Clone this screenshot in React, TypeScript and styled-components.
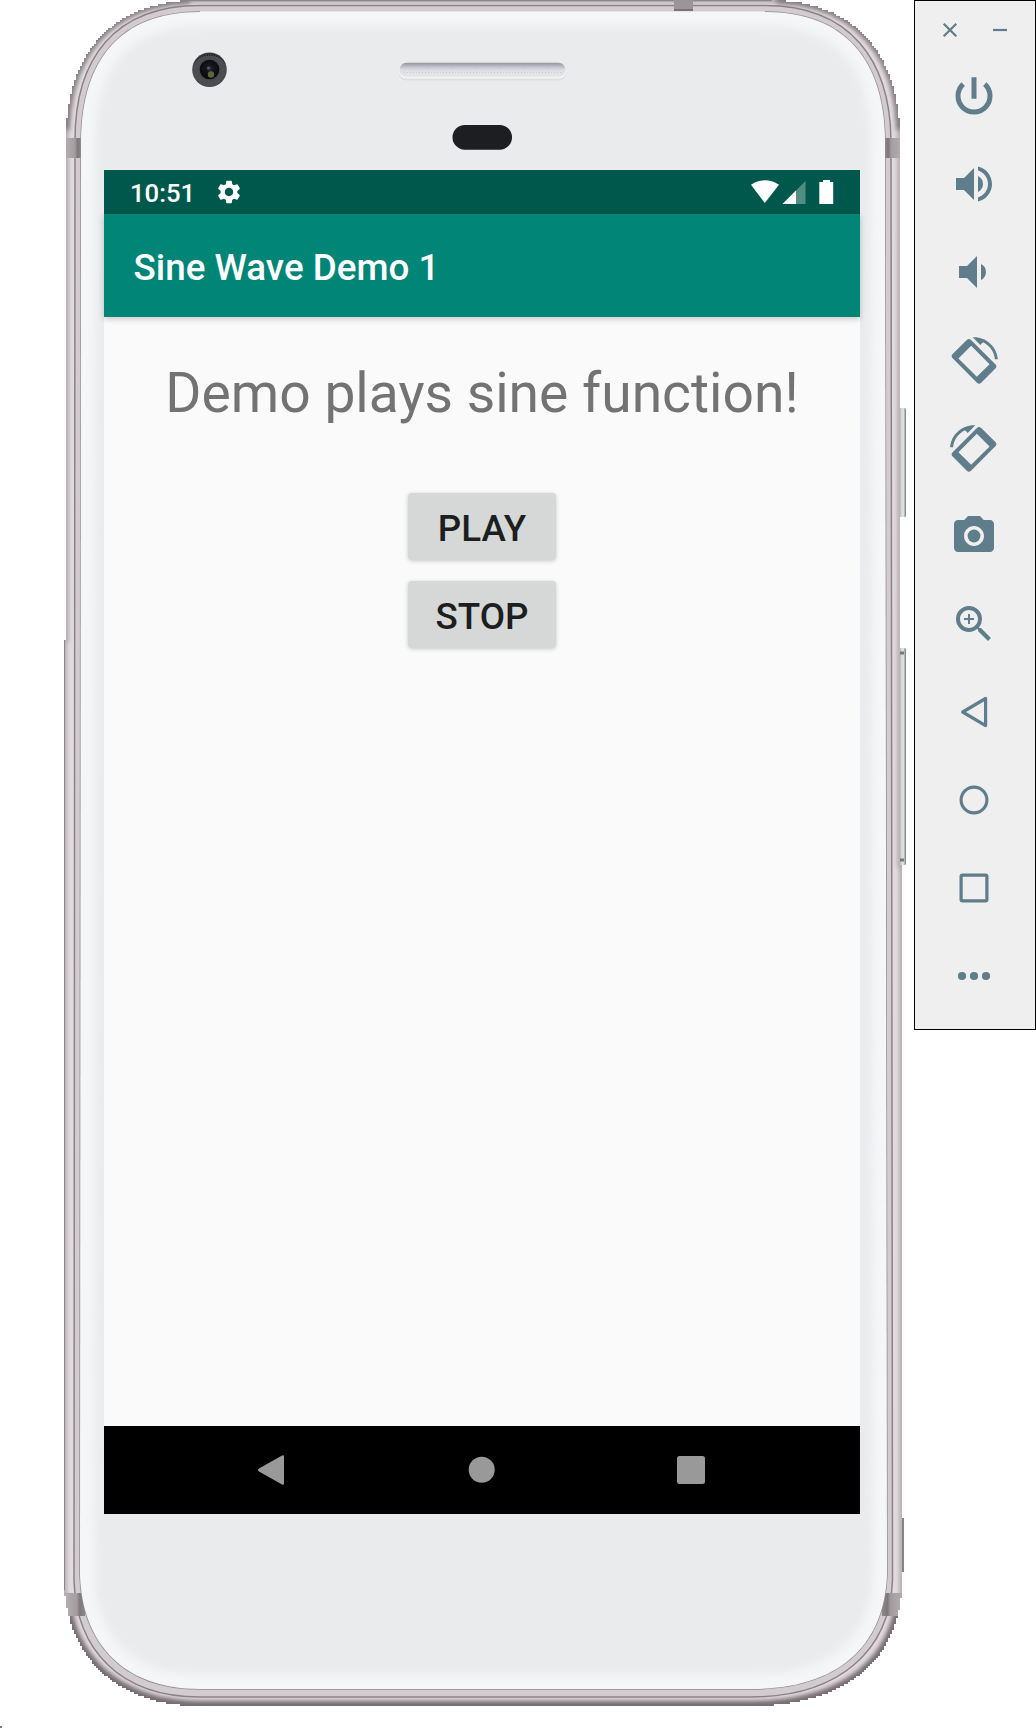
import React from 'react';
import styled, { createGlobalStyle } from 'styled-components';
import { MdSettings, MdVolumeUp, MdVolumeDown, MdPhotoCamera, MdZoomIn } from 'react-icons/md';

const GlobalStyle = createGlobalStyle`
  *, *::before, *::after { box-sizing: border-box; }
  body { margin: 0; background: #fff; overflow: hidden; }
`;

const Desktop = styled.main`
  position: relative;
  display: flex;
  justify-content: space-between;
  align-items: flex-start;
  width: 1036px;
  height: 1728px;
  overflow: hidden;
  background: #fff;
  font-family: Roboto, 'Noto Sans', sans-serif;
`;

const Device = styled.section`
  position: relative;
  width: 910px;
  height: 1710px;
  padding: 170px 50px 0 104px;
`;

const ShellArt = styled.svg`
  position: absolute;
  inset: 0;
  width: 910px;
  height: 1710px;
`;

const Screen = styled.div`
  position: relative;
  display: flex;
  flex-direction: column;
  width: 756px;
  height: 1344px;
  background: #fafafa;
`;

const StatusBar = styled.header`
  display: flex;
  align-items: center;
  height: 44px;
  padding: 0 26px;
  background: #00574b;
  color: #fff;
`;

const Clock = styled.span`
  width: 85px;
  font-size: 25.7px;
  font-weight: 500;
  line-height: 44px;
  padding-top: 2px;
`;

const GearIcon = styled(MdSettings)`
  width: 28px;
  height: 28px;
`;

const StatusIcons = styled.svg`
  width: 84px;
  height: 44px;
  margin-left: auto;
`;

const AppBar = styled.div`
  display: flex;
  align-items: center;
  height: 103px;
  padding: 4px 29px 0 29.5px;
  background: #008577;
  color: #fff;
  box-shadow: 0 2px 6px rgba(0, 0, 0, 0.2);
`;

const Title = styled.h1`
  margin: 0;
  font-size: 36.8px;
  font-weight: 500;
  line-height: 44px;
  white-space: nowrap;
`;

const Content = styled.div`
  display: flex;
  flex: 1;
  flex-direction: column;
  align-items: center;
  padding-top: 44px;
`;

const Message = styled.p`
  margin: 0 0 67px;
  color: #737373;
  font-size: 55.2px;
  line-height: 65px;
  white-space: nowrap;
`;

const ActionButton = styled.button`
  width: 147.5px;
  height: 67px;
  margin-bottom: 21px;
  padding: 5px 0 0;
  border: 0;
  border-radius: 4px;
  background: #d6d8d7;
  color: #1d1e1e;
  box-shadow: 0 1px 4px rgba(0, 0, 0, 0.2);
  font: 500 36.75px/1 Roboto, 'Noto Sans', sans-serif;
`;

const NavBar = styled.nav`
  display: flex;
  align-items: center;
  justify-content: center;
  gap: 162px;
  height: 88px;
  background: #000;
`;

const NavGlyph = styled.svg`
  width: 48px;
  height: 48px;
  fill: #999;
`;

const Toolbar = styled.aside`
  width: 122px;
  height: 1030px;
  padding-top: 14px;
  border: 1px solid #000;
  background: #efefef;
  color: #607d8b;
`;

const WindowControls = styled.div`
  display: flex;
  justify-content: center;
  gap: 20px;
  height: 37px;
`;

const ControlGlyph = styled.svg`
  width: 30px;
  height: 30px;
  fill: none;
  stroke: currentColor;
  stroke-width: 2.2;
`;

const ToolList = styled.div`
  display: flex;
  flex-direction: column;
`;

const Tool = styled.button`
  display: flex;
  align-items: center;
  justify-content: center;
  height: 88px;
  padding: 0 2px 0 0;
  border: 0;
  background: none;
  color: inherit;

  svg { width: 48px; height: 48px; overflow: visible; }
`;

const CornerMark = styled.i`
  position: absolute;
  left: 0;
  bottom: 0;
  width: 2px;
  height: 2px;
  background: #777;
`;

type Point = [number, number];

// Walks a cubic curve and emits it as a stepped outline on a two-pixel grid.
function steps(a: Point, b: Point, c: Point, d: Point): string {
  const snap = (v: number) => Math.round(v / 2) * 2;
  const axis = (t: number, i: 0 | 1) => {
    const u = 1 - t;
    return u * u * u * a[i] + 3 * u * u * t * b[i] + 3 * u * t * t * c[i] + t * t * t * d[i];
  };
  let path = '';
  let last = '';
  for (let n = 0; n <= 300; n += 1) {
    const x = snap(axis(n / 300, 0));
    const y = snap(axis(n / 300, 1));
    const step = `H${x}V${y}`;
    if (step !== last) path += step;
    last = step;
  }
  return path;
}

const OUTER = [
  'M66 140',
  steps([66, 140], [66, 60], [105, 0], [200, 0]),
  'H766',
  steps([766, 0], [861, 0], [900, 60], [900, 140]),
  'V865H902V1580',
  steps([902, 1580], [902, 1660], [846, 1706], [750, 1706]),
  'H200',
  steps([200, 1706], [120, 1706], [66, 1660], [64, 1580]),
  'V640H66Z',
].join('');
const MIDDLE =
  'M75 140C75 60 113 5.5 200 5.5H765C850 5.5 890 60 891 140L892.5 1580C890 1650 840 1697 750 1697H200C120 1697 76 1650 74 1580Z';
const FACE =
  'M81 140C82 60 120 12 200 12H765C845 12 884 60 885 140L887 1575C884 1645 840 1689 750 1689H200C120 1689 82 1640 80 1575Z';

function Shell() {
  return (
    <ShellArt viewBox="0 0 910 1710" aria-hidden="true">
      <defs>
        <clipPath id="outer"><path d={OUTER} /></clipPath>
        <clipPath id="face"><path d={FACE} /></clipPath>
        <filter id="soft" x="-5%" y="-5%" width="110%" height="110%"><feGaussianBlur stdDeviation="5" /></filter>
        <filter id="edge" x="-5%" y="-5%" width="110%" height="110%"><feGaussianBlur stdDeviation="2.5" /></filter>
        <linearGradient id="slot" x1="0" y1="0" x2="0" y2="1">
          <stop offset="0" stopColor="#9195a0" />
          <stop offset=".28" stopColor="#bcc0c8" />
          <stop offset=".5" stopColor="#dcdee3" />
          <stop offset="1" stopColor="#e6e8ec" />
        </linearGradient>
        <linearGradient id="band" x1="0" y1="0" x2="1" y2="0">
          <stop offset="0" stopColor="#b5afb2" />
          <stop offset=".6" stopColor="#a39da0" />
          <stop offset=".75" stopColor="#7f797c" />
          <stop offset="1" stopColor="#8d878a" />
        </linearGradient>
        <linearGradient id="key" x1="0" y1="0" x2="1" y2="0">
          <stop offset="0" stopColor="#8a8a8a" />
          <stop offset=".3" stopColor="#d6dad6" />
          <stop offset=".65" stopColor="#dfe2de" />
          <stop offset="1" stopColor="#757575" />
        </linearGradient>
        <radialGradient id="glass" cx=".5" cy=".45" r=".5">
          <stop offset="0" stopColor="#343448" />
          <stop offset=".35" stopColor="#15151d" />
          <stop offset="1" stopColor="#0b0b0e" />
        </radialGradient>
      </defs>

      <rect x="899" y="408" width="7" height="109" rx="1.5" fill="url(#key)" />
      <rect x="899" y="648" width="7" height="217" rx="1.5" fill="url(#key)" />
      <path d="M900 653H904M900 860H904" stroke="#777" strokeWidth="3" />
      <rect x="901" y="1518" width="3" height="54" fill="#858384" />

      <path d={OUTER} fill="#e2dcdf" />
      <g clipPath="url(#outer)">
        <path d={OUTER} fill="none" stroke="#968e92" strokeWidth="3.5" filter="url(#edge)" />
        <path d="M66 130C66 60 105 0 190 0M776 0C861 0 900 60 900 130" fill="none" stroke="#80787c" strokeWidth="7" filter="url(#edge)" />
        <path d="M66 1605C76 1670 130 1706 200 1706H750C836 1706 890 1670 900 1605" fill="none" stroke="#756c71" strokeWidth="10" filter="url(#edge)" />
        <path d="M186 0.5H772" stroke="#8b8689" strokeWidth="1.5" />
        <path d="M64.5 640V1590" stroke="#8b8689" />
        <path d={MIDDLE} fill="#d2cbcf" stroke="#898286" strokeWidth="1.5" />
        <rect x="64" y="138" width="18" height="20" fill="url(#band)" />
        <rect x="64" y="1593" width="21" height="23" fill="url(#band)" />
        <rect x="-902" y="138" width="18" height="20" fill="url(#band)" transform="scale(-1 1)" />
        <rect x="-904" y="1593" width="22" height="23" fill="url(#band)" transform="scale(-1 1)" />
        <rect x="674" y="0" width="19" height="11" fill="#9b9598" />
        <path d="M674 10H693" stroke="#787376" strokeWidth="2" />
      </g>
      <path d={FACE} fill="#eaebed" stroke="#918a8e" strokeWidth="1.5" />
      <path d="M200 12H765" stroke="#e4e2e4" strokeWidth="1.8" />
      <g clipPath="url(#face)">
        <path d={FACE} fill="none" stroke="#f5f6f8" strokeWidth="28" filter="url(#soft)" />
      </g>

      <circle cx="209.5" cy="69.7" r="17.3" fill="#48494d" />
      <path d="M193.5 64A17.3 17.3 0 0 1 225.5 64A18 15 0 0 0 193.5 64" fill="#202125" />
      <circle cx="209.5" cy="69.7" r="13.5" fill="none" stroke="#55565b" strokeWidth="5" strokeDasharray="1.2 1" opacity=".65" />
      <circle cx="209.5" cy="69.5" r="9.8" fill="url(#glass)" />
      <circle cx="211" cy="74.5" r="3.2" fill="#72733c" opacity=".85" />
      <circle cx="208.5" cy="68" r="1.5" fill="#56566e" />

      <rect x="398.5" y="64.5" width="168" height="16" rx="8" fill="#dfe0e3" />
      <rect x="398.5" y="63.5" width="168" height="15" rx="7.5" fill="#f3f4f6" />
      <rect x="399.5" y="62.7" width="166" height="14.3" rx="7.1" fill="url(#slot)" />
      <path d="M405 69.5H560M404 72.5H561" stroke="#c7cad1" strokeWidth="1" strokeDasharray="1 2" />
      <rect x="452.5" y="125" width="59.5" height="24.7" rx="12.3" fill="#1c1e22" />
    </ShellArt>
  );
}

const ARC = 'M16.48 2.52c3.27 1.55 5.61 4.72 5.97 8.48h1.5C23.44 4.84 18.29 0 12 0l-.66.03 3.81 3.81 1.33-1.32z';

function RotateIcon({ flipped = false }: { flipped?: boolean }) {
  return (
    <svg viewBox="0 0 24 24" fill="currentColor">
      <g transform={flipped ? 'translate(24 .65) scale(-1 1)' : 'translate(0 .65)'}>
        <path d={ARC} />
        <path
          transform="translate(12 12) rotate(45)"
          fillRule="evenodd"
          d="M-8.6-6.5H8.6A1.5 1.5 0 0 1 10.1-5V5A1.5 1.5 0 0 1 8.6 6.5H-8.6A1.5 1.5 0 0 1-10.1 5V-5A1.5 1.5 0 0 1-8.6-6.5ZM-6.5-4.5V4.5H6.5V-4.5Z"
        />
      </g>
    </svg>
  );
}

const PowerIcon = () => (
  <svg viewBox="0 0 48 48" fill="none" stroke="currentColor" strokeWidth="5">
    <path d="M24 5.3V26.7M13.2 12.2A16 16 0 1 0 34.8 12.2" />
  </svg>
);

const BackIcon = () => (
  <svg viewBox="0 0 48 48" fill="none" stroke="currentColor" strokeWidth="3.2" strokeLinejoin="round">
    <path d="M35.6 10.5V37.6L12.7 24Z" />
  </svg>
);

const HomeIcon = () => (
  <svg viewBox="0 0 48 48" fill="none" stroke="currentColor" strokeWidth="3.1">
    <circle cx="24" cy="24" r="12.9" />
  </svg>
);

const OverviewIcon = () => (
  <svg viewBox="0 0 48 48" fill="none" stroke="currentColor" strokeWidth="3.2">
    <rect x="11.1" y="11.1" width="25.8" height="25.8" rx="1.4" />
  </svg>
);

const MoreIcon = () => (
  <svg viewBox="0 0 48 48" fill="currentColor">
    <circle cx="12" cy="24" r="4.1" />
    <circle cx="24" cy="24" r="4.1" />
    <circle cx="36" cy="24" r="4.1" />
  </svg>
);

const TOOLS: { label: string; icon: React.ReactNode }[] = [
  { label: 'Power', icon: <PowerIcon /> },
  { label: 'Volume up', icon: <MdVolumeUp /> },
  { label: 'Volume down', icon: <MdVolumeDown style={{ transform: 'translateX(-1px)' }} /> },
  { label: 'Rotate left', icon: <RotateIcon /> },
  { label: 'Rotate right', icon: <RotateIcon flipped /> },
  { label: 'Take screenshot', icon: <MdPhotoCamera /> },
  { label: 'Zoom', icon: <MdZoomIn /> },
  { label: 'Back', icon: <BackIcon /> },
  { label: 'Home', icon: <HomeIcon /> },
  { label: 'Overview', icon: <OverviewIcon /> },
  { label: 'More', icon: <MoreIcon /> },
];

export default function App() {
  return (
    <Desktop>
      <GlobalStyle />
      <Device>
        <Shell />
        <Screen>
          <StatusBar>
            <Clock>10:51</Clock>
            <GearIcon />
            <StatusIcons viewBox="0 0 84 44" fill="#fff">
              <path d="M1 14.7Q15 6 29 14.7L14.8 33Z" />
              <path d="M55.5 11V34H32.5Z" opacity=".32" />
              <path d="M46 20.5V34H32.5Z" />
              <path d="M73 10H80V12H83.2V34H69.3V12H73Z" />
            </StatusIcons>
          </StatusBar>
          <AppBar>
            <Title>Sine Wave Demo 1</Title>
          </AppBar>
          <Content>
            <Message>Demo plays sine function!</Message>
            <ActionButton>PLAY</ActionButton>
            <ActionButton>STOP</ActionButton>
          </Content>
          <NavBar>
            <NavGlyph viewBox="0 0 48 48"><path d="M36 10.5V37.5Q36 39.5 34 38.5L11 25.5Q9 24 11 22.5L34 9.5Q36 8.5 36 10.5Z" /></NavGlyph>
            <NavGlyph viewBox="0 0 48 48"><circle cx="23.7" cy="23.7" r="13" /></NavGlyph>
            <NavGlyph viewBox="0 0 48 48"><rect x="9" y="10" width="28" height="28" rx="2.5" /></NavGlyph>
          </NavBar>
        </Screen>
      </Device>
      <Toolbar>
        <WindowControls>
          <ControlGlyph viewBox="0 0 30 30"><path d="M8.7 8.7L21.3 21.3M21.3 8.7L8.7 21.3" /></ControlGlyph>
          <ControlGlyph viewBox="0 0 30 30"><path d="M8 15H22" /></ControlGlyph>
        </WindowControls>
        <ToolList>
          {TOOLS.map(({ label, icon }) => (
            <Tool key={label} aria-label={label}>{icon}</Tool>
          ))}
        </ToolList>
      </Toolbar>
      <CornerMark />
    </Desktop>
  );
}
